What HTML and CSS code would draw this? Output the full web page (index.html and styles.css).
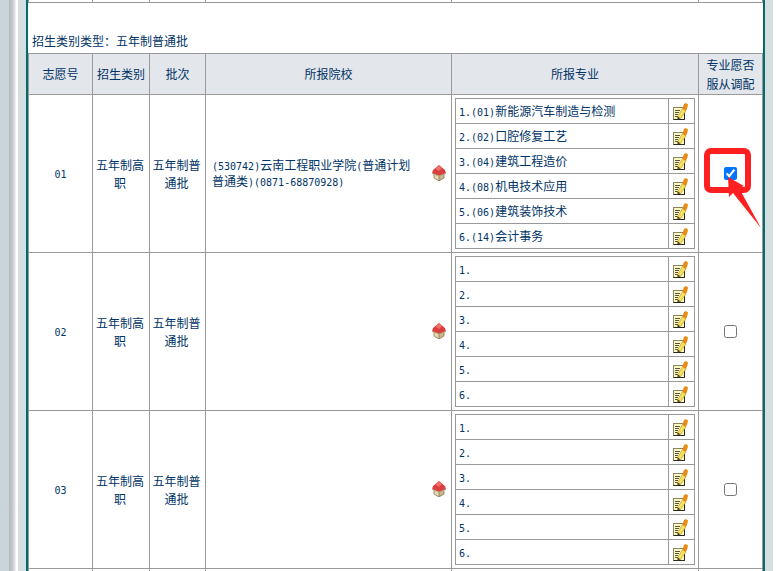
FILE: index.html
```html
<!DOCTYPE html>
<html lang="zh">
<head>
<meta charset="utf-8">
<title>志愿</title>
<link rel="stylesheet" href="styles.css">
</head>
<body>
<svg class="defs" width="0" height="0">
  <symbol id="house" viewBox="0 0 14 16">
    <polygon points="2,8 7,11 7,16 2,13" fill="#ead9b0"/>
    <polygon points="12,8 7,11 7,16 12,13" fill="#c9b68a"/>
    <path d="M2 8v5l5 3 5-3V8M7 11v5" fill="none" stroke="#85765a" stroke-width=".8"/>
    <polygon points="7,0 13,5 14,8.5 12,9 7,11 2,9 0,8.5 1,5" fill="#d9403f"/>
    <polygon points="7,0 10,3 7,6 3.5,3.5" fill="#f0706a"/>
    <path d="M0.5 8.5L7 11l6.5-2.5" fill="none" stroke="#a8b07a" stroke-width=".7"/>
  </symbol>
  <symbol id="edit" viewBox="0 0 15 17">
    <rect x="0.5" y="4.5" width="11" height="12" fill="#fdf9c6" stroke="#8a8660"/>
    <path d="M11.5 6.5v10h-11" fill="none" stroke="#2a2a1c" stroke-width="1"/>
    <path d="M2 7.5h5M2 9.5h4M2 11.5h3M2 13.5h3" stroke="#55533a" stroke-width="1"/>
    <polygon points="4.5,14 9.5,5.5 13,8 7.5,15.5" fill="#f6e15c" stroke="#a07c20" stroke-width=".5"/>
    <polygon points="4.5,13.5 7.5,15.5 4.5,16" fill="#3a2a10"/>
    <polygon points="9.5,5.5 11,1 13,0 15,1.5 14.5,4 13,8" fill="#ea8a12"/>
  </symbol>
</svg>
<div class="shell">
  <div class="rail"></div>
  <main class="main">
    <table class="grid stub">
      <colgroup><col class="c1"><col class="c2"><col class="c3"><col class="c4"><col class="c5"><col class="c6"></colgroup>
      <tr class="stub-row"><td></td><td></td><td></td><td></td><td></td><td></td></tr>
    </table>
    <p class="caption">招生类别类型：五年制普通批</p>
    <table class="grid">
      <colgroup><col class="c1"><col class="c2"><col class="c3"><col class="c4"><col class="c5"><col class="c6"></colgroup>
      <tr class="head">
        <th>志愿号</th><th>招生类别</th><th>批次</th><th>所报院校</th><th>所报专业</th><th class="two">专业愿否<br>服从调配</th>
      </tr>
      <tr class="row">
        <td class="num"><span class="lat">01</span></td>
        <td class="wrap">五年制高职</td>
        <td class="wrap">五年制普通批</td>
        <td class="school">
          <div class="school-in">
            <span class="school-name"><span class="lat">(530742)</span>云南工程职业学院<span class="lat">(</span>普通计划普通类<span class="lat">)(0871-68870928)</span></span>
            <svg class="house"><use href="#house"/></svg>
          </div>
        </td>
        <td class="majors">
          <table class="list">
            <tr><td><span class="lat">1.(01)</span>新能源汽车制造与检测</td><td class="ic"><svg class="edit"><use href="#edit"/></svg></td></tr>
            <tr><td><span class="lat">2.(02)</span>口腔修复工艺</td><td class="ic"><svg class="edit"><use href="#edit"/></svg></td></tr>
            <tr><td><span class="lat">3.(04)</span>建筑工程造价</td><td class="ic"><svg class="edit"><use href="#edit"/></svg></td></tr>
            <tr><td><span class="lat">4.(08)</span>机电技术应用</td><td class="ic"><svg class="edit"><use href="#edit"/></svg></td></tr>
            <tr><td><span class="lat">5.(06)</span>建筑装饰技术</td><td class="ic"><svg class="edit"><use href="#edit"/></svg></td></tr>
            <tr><td><span class="lat">6.(14)</span>会计事务</td><td class="ic"><svg class="edit"><use href="#edit"/></svg></td></tr>
          </table>
        </td>
        <td><input type="checkbox" class="chk" checked></td>
      </tr>
      <tr class="row">
        <td class="num"><span class="lat">02</span></td>
        <td class="wrap">五年制高职</td>
        <td class="wrap">五年制普通批</td>
        <td class="school"><div class="school-in"><span class="school-name"></span><svg class="house"><use href="#house"/></svg></div></td>
        <td class="majors">
          <table class="list">
            <tr><td><span class="lat">1.</span></td><td class="ic"><svg class="edit"><use href="#edit"/></svg></td></tr>
            <tr><td><span class="lat">2.</span></td><td class="ic"><svg class="edit"><use href="#edit"/></svg></td></tr>
            <tr><td><span class="lat">3.</span></td><td class="ic"><svg class="edit"><use href="#edit"/></svg></td></tr>
            <tr><td><span class="lat">4.</span></td><td class="ic"><svg class="edit"><use href="#edit"/></svg></td></tr>
            <tr><td><span class="lat">5.</span></td><td class="ic"><svg class="edit"><use href="#edit"/></svg></td></tr>
            <tr><td><span class="lat">6.</span></td><td class="ic"><svg class="edit"><use href="#edit"/></svg></td></tr>
          </table>
        </td>
        <td><input type="checkbox" class="chk"></td>
      </tr>
      <tr class="row">
        <td class="num"><span class="lat">03</span></td>
        <td class="wrap">五年制高职</td>
        <td class="wrap">五年制普通批</td>
        <td class="school"><div class="school-in"><span class="school-name"></span><svg class="house"><use href="#house"/></svg></div></td>
        <td class="majors">
          <table class="list">
            <tr><td><span class="lat">1.</span></td><td class="ic"><svg class="edit"><use href="#edit"/></svg></td></tr>
            <tr><td><span class="lat">2.</span></td><td class="ic"><svg class="edit"><use href="#edit"/></svg></td></tr>
            <tr><td><span class="lat">3.</span></td><td class="ic"><svg class="edit"><use href="#edit"/></svg></td></tr>
            <tr><td><span class="lat">4.</span></td><td class="ic"><svg class="edit"><use href="#edit"/></svg></td></tr>
            <tr><td><span class="lat">5.</span></td><td class="ic"><svg class="edit"><use href="#edit"/></svg></td></tr>
            <tr><td><span class="lat">6.</span></td><td class="ic"><svg class="edit"><use href="#edit"/></svg></td></tr>
          </table>
        </td>
        <td><input type="checkbox" class="chk"></td>
      </tr>
      <tr class="row"><td></td><td></td><td></td><td></td><td></td><td></td></tr>
    </table>
  </main>
  <div class="rail-right"></div>
</div>
<svg class="note" width="778" height="571" viewBox="0 0 778 571">
  <rect x="707" y="151" width="41" height="39" rx="4" fill="none" stroke="#fe2020" stroke-width="6"/>
  <polygon points="728,177 744,186 739,188 761,228 733,193 729,197" fill="#fe2020"/>
</svg>
</body>
</html>
```
FILE: styles.css
```css
html, body {
  margin: 0;
  height: 571px;
  overflow: hidden;
  background: #fff;
}
body {
  font-family: "Noto Sans CJK SC", "Liberation Sans", sans-serif;
  font-size: 12px;
  line-height: 18px;
  color: #003366;
  position: relative;
}
.defs { position: absolute; }
.shell {
  display: flex;
  width: 773px;
  height: 571px;
  overflow: hidden;
}
.rail {
  flex: 0 0 26px;
  background: linear-gradient(90deg, #c9d5da 0, #c9d5da 9px, #b4babf 9px, #c0c5c9 12px, #dfe2e4 15px, #ffffff 16px, #ffffff 18px, #d5dfe2 18px, #d5dfe2 26px);
}
.main {
  flex: 0 0 734px;
  border-left: 2px solid #046a6a;
  border-right: 2px solid #046a6a;
  background: #fff;
}
.rail-right {
  flex: 1;
  background: #d5dfe2;
}
.grid {
  border-collapse: collapse;
  table-layout: fixed;
  width: 734px;
}
.grid > tbody > tr > td,
.grid > tbody > tr > th {
  border: 1px solid #999;
  padding: 0 3px;
  text-align: center;
  font-weight: normal;
  box-sizing: border-box;
}
.grid > tbody > tr > .wrap { padding: 2px 4px 0 2px; }
.grid > tbody > tr > .num { padding-top: 2px; }
.grid > tbody > tr > .two { line-height: 19px; }
.c1 { width: 64px; }
.c2 { width: 57px; }
.c3 { width: 56px; }
.c4 { width: 246px; }
.c5 { width: 247px; }
.c6 { width: 64px; }
.stub-row td { height: 2px; padding: 0; }
.grid > tbody > .stub-row > td { border-top: 0; padding: 0; }
.caption {
  margin: 0;
  height: 50px;
  box-sizing: border-box;
  padding: 29px 0 0 4px;
}
.head { height: 41px; background: #e3e6eb; }
.row { height: 158px; }
.lat {
  font-family: "DejaVu Sans Mono", "Liberation Mono", monospace;
  font-size: 10px;
}
.school-in {
  display: flex;
  align-items: center;
  justify-content: space-between;
  text-align: left;
  padding-left: 3px;
  padding-right: 2px;
}
.school-name { width: 204px; line-height: 14px; padding-top: 2px; }
.house { width: 14px; height: 16px; flex: none; }
.majors.majors { padding: 0; }
.list {
  border-collapse: collapse;
  table-layout: fixed;
  width: 240px;
  margin: 0 auto;
}
.list td {
  border: 1px solid #999;
  height: 25px;
  padding: 2px 0 0 3px;
  box-sizing: border-box;
  text-align: left;
  line-height: 18px;
}
.list .ic { width: 26px; padding: 0; }
.edit { width: 15px; height: 17px; display: block; margin: 1px 0 0 4px; }
.chk { width: 13px; height: 13px; margin: 0 auto; display: block; accent-color: #0075ff; }
.note { position: absolute; left: 0; top: 0; pointer-events: none; }
```
